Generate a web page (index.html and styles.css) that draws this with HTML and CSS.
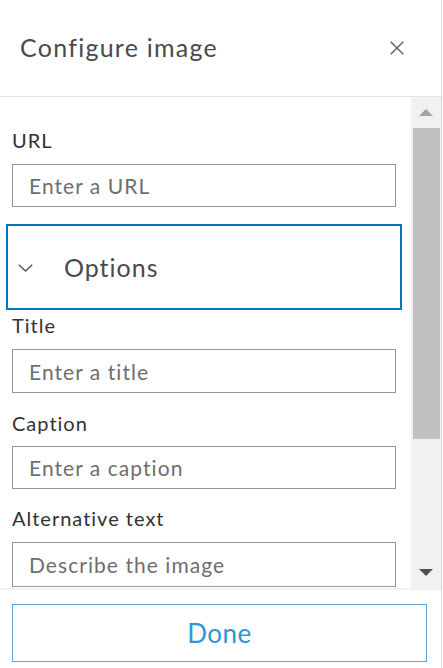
FILE: index.html
```html
<!DOCTYPE html>
<html lang="en">
<head>
<meta charset="utf-8">
<title>Configure image</title>
<link rel="stylesheet" href="styles.css">
</head>
<body>
<div class="panel">
  <header class="header">
    <h1 class="title">Configure image</h1>
    <button class="close" aria-label="Close">
      <svg width="14" height="14" viewBox="0 0 14 14"><path d="M0.7 0.7 L13.3 13.3 M13.3 0.7 L0.7 13.3" stroke="#6a6a6a" stroke-width="1.6" fill="none"/></svg>
    </button>
  </header>
  <div class="scroll">
    <div class="content">
      <div class="field first">
        <label class="label">URL</label>
        <div class="input">Enter a URL</div>
      </div>
      <div class="options">
        <svg class="chev" width="15" height="8" viewBox="0 0 15 8"><path d="M0.8 0.8 L7.5 7 L14.2 0.8" stroke="#555" stroke-width="1.4" fill="none"/></svg>
        <span class="options-text">Options</span>
      </div>
      <div class="field title-field">
        <label class="label">Title</label>
        <div class="input tall">Enter a title</div>
      </div>
      <div class="field caption-field">
        <label class="label">Caption</label>
        <div class="input">Enter a caption</div>
      </div>
      <div class="field">
        <label class="label">Alternative text</label>
        <div class="input taller">Describe the image</div>
      </div>
    </div>
    <div class="scrollbar">
      <div class="arrow up"></div>
      <div class="track"><div class="thumb"></div></div>
      <div class="arrow down"></div>
    </div>
  </div>
  <footer class="footer">
    <button class="done">Done</button>
  </footer>
</div>
</body>
</html>
```

FILE: styles.css
```css
* { box-sizing: border-box; }
html, body { margin: 0; padding: 0; background: #fff; }
body { font-family: Lato, "Noto Sans", sans-serif; color: #323232; }

.panel {
  width: 442px;
  height: 668px;
  border-right: 1px solid #d8d8d8;
  display: flex;
  flex-direction: column;
  overflow: hidden;
}

.header {
  height: 97px;
  flex: none;
  border-bottom: 1px solid #e2e2e2;
  display: flex;
  align-items: center;
  justify-content: space-between;
  padding: 0 37px 0 20px;
}
.title {
  margin: 0;
  font-weight: 400;
  font-size: 25px;
  letter-spacing: 0.05em;
  color: #4a4a4a;
  line-height: 30px;
  position: relative;
  top: -1px;
}
.close {
  border: 0;
  background: none;
  padding: 0;
  width: 14px;
  height: 14px;
  display: flex;
}

.scroll {
  height: 493px;
  flex: none;
  display: flex;
  border-bottom: 2px solid #f2f2f2;
}
.content {
  width: 411px;
  flex: none;
  overflow: hidden;
  padding: 0 15px 0 12px;
}

.field { margin-top: 17px; }
.field.first { margin-top: 31px; }
.field.title-field { margin-top: 3px; }
.field.caption-field { margin-top: 18px; }
.label {
  display: block;
  font-size: 20px;
  letter-spacing: 0.05em;
  line-height: 24px;
  color: #323232;
  margin-bottom: 12px;
}
.caption-field .label { margin-bottom: 11px; }
.input {
  height: 43px;
  border: 1px solid #959595;
  padding: 0 16px;
  display: flex;
  align-items: center;
  font-size: 21px;
  letter-spacing: 0.05em;
  color: #6e6e6e;
}
.input.tall { height: 44px; }
.input.taller { height: 45px; }

.options {
  margin: 17px -6px 0 -6px;
  height: 86px;
  border: 2px solid #0079c1;
  display: flex;
  align-items: center;
  padding-left: 10px;
}
.chev { flex: none; margin-top: 2px; }
.options-text {
  margin-left: 31px;
  font-size: 25px;
  letter-spacing: 0.04em;
  color: #4a4a4a;
  line-height: 30px;
}

.scrollbar {
  width: 30px;
  flex: none;
  background: #f1f1f1;
  display: flex;
  flex-direction: column;
}
.arrow {
  height: 31px;
  flex: none;
  display: flex;
  align-items: center;
  justify-content: center;
}
.arrow::before {
  content: "";
  width: 0;
  height: 0;
  border-left: 7px solid transparent;
  border-right: 7px solid transparent;
}
.arrow.up::before { border-bottom: 7px solid #a3a3a3; }
.arrow.down::before { border-top: 7px solid #505050; }
.track {
  flex: 1;
  padding: 0 1px 0 2px;
}
.thumb {
  height: 311px;
  background: #c1c1c1;
}

.footer {
  flex: 1;
  padding: 14px 15px 0 12px;
}
.done {
  width: 415px;
  height: 58px;
  border: 1.5px solid #5aa8dc;
  background: #fff;
  font-family: Lato, "Noto Sans", sans-serif;
  font-size: 26px;
  letter-spacing: 0.02em;
  color: #2f94d8;
  padding: 0;
}
```
